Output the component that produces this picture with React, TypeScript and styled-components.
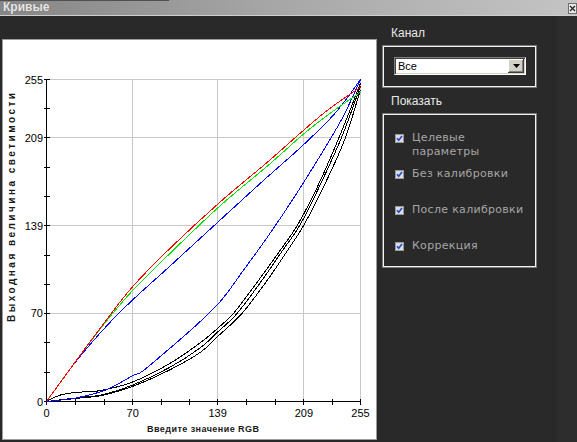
import React from "react";
import styled, { createGlobalStyle } from "styled-components";

type Pt = [number, number];

interface Curve {
  color: string;
  points: Pt[];
}

interface ShowOption {
  lines: string[];
}

const GlobalStyle = createGlobalStyle`
  html, body {
    margin: 0;
    padding: 0;
    background: #292929;
  }
  body {
    width: 577px;
    height: 442px;
    overflow: hidden;
    font-family: "Liberation Sans", Arial, sans-serif;
  }
`;

// plot geometry in page pixels
const X0 = 46.5;
const Y0 = 401.5;
const PLOT_W = 314;
const PLOT_H = 322;
const px = (v: number) => X0 + (v * PLOT_W) / 255;
const py = (v: number) => Y0 - (v * PLOT_H) / 255;

const MAJOR = [70, 139, 209, 255];
const TICKS = [0, 23.3, 46.7, 70, 93, 116, 139, 162.3, 185.7, 209, 232, 255];

const CURVES: Curve[] = [
  {
    color: "#000000",
    points: [[0, 0], [8, 4], [15, 6], [25, 7.3], [44, 8.7], [70, 15.5], [100, 30], [125, 46.6], [139, 58], [152, 70], [170, 93], [190, 120], [204, 140], [220, 170], [238, 210], [255, 252]],
  },
  {
    color: "#000000",
    points: [[0, 0], [25, 2.9], [46, 5.5], [70, 13], [100, 27], [125, 42.6], [139, 55], [155, 70], [175, 96], [192, 120], [206, 140], [222, 171], [240, 210], [255, 250]],
  },
  {
    color: "#000000",
    points: [[0, 0], [25, 2.5], [46, 5], [70, 12], [100, 25], [125, 39], [139, 51.5], [159, 70], [180, 97], [196, 120], [209, 139.7], [225, 170], [242, 207], [255, 247]],
  },
  {
    color: "#0000ff",
    points: [[0, 0], [25, 3], [49, 9.5], [70, 20.5], [78, 24], [100, 42], [120, 59], [141, 79], [160, 104], [180, 131], [200, 160], [220, 191], [240, 224], [255, 255]],
  },
  {
    color: "#0000ff",
    points: [[0, 0], [25, 33], [49, 60], [70, 80.5], [100, 107], [141, 143.7], [175, 174], [209, 203.6], [235, 229], [255, 255]],
  },
  {
    color: "#00e600",
    points: [[0, 0], [25, 33.5], [49, 64], [70, 88], [100, 117], [141, 155], [180, 187], [209, 212], [230, 228], [255, 245]],
  },
  {
    color: "#ff0000",
    points: [[0, 0], [25, 33.5], [49, 65], [70, 91], [100, 121], [141, 158], [180, 190], [209, 215], [230, 232], [255, 249]],
  },
];

const SHOW_OPTIONS: ShowOption[] = [
  { lines: ["Целевые", "параметры"] },
  { lines: ["Без калибровки"] },
  { lines: ["После калибровки"] },
  { lines: ["Коррекция"] },
];

// catmull-rom through the sampled points, as a cubic path
function smoothPath(points: Pt[]): string {
  const p = points.map(([x, y]) => [px(x), py(y)]);
  let d = `M${p[0][0].toFixed(2)},${p[0][1].toFixed(2)}`;
  for (let i = 0; i < p.length - 1; i++) {
    const p0 = p[i - 1] || p[i];
    const p1 = p[i];
    const p2 = p[i + 1];
    const p3 = p[i + 2] || p2;
    const c1x = p1[0] + (p2[0] - p0[0]) / 6;
    const c1y = p1[1] + (p2[1] - p0[1]) / 6;
    const c2x = p2[0] - (p3[0] - p1[0]) / 6;
    const c2y = p2[1] - (p3[1] - p1[1]) / 6;
    d += ` C${c1x.toFixed(2)},${c1y.toFixed(2)} ${c2x.toFixed(2)},${c2y.toFixed(2)} ${p2[0].toFixed(2)},${p2[1].toFixed(2)}`;
  }
  return d;
}

const snap = (n: number) => Math.floor(n) + 0.5;

function CurvesChart() {
  return (
    <ChartSvg width={373} height={399} viewBox="3 40 373 399">
      <g stroke="#c8c8c8" strokeWidth={1} shapeRendering="crispEdges">
        {MAJOR.map((v) => (
          <line key={`gx${v}`} x1={snap(px(v))} y1={py(255)} x2={snap(px(v))} y2={Y0} />
        ))}
        {MAJOR.map((v) => (
          <line key={`gy${v}`} x1={X0} y1={snap(py(v))} x2={px(255)} y2={snap(py(v))} />
        ))}
      </g>
      <g stroke="#000" strokeWidth={1} shapeRendering="crispEdges">
        <line x1={X0} y1={py(255)} x2={X0} y2={Y0} />
        <line x1={X0} y1={Y0} x2={px(255)} y2={Y0} />
        {TICKS.map((v) => (
          <line key={`ty${v}`} x1={X0 - 3} y1={snap(py(v))} x2={X0 + 3} y2={snap(py(v))} />
        ))}
        {TICKS.map((v) => (
          <line key={`tx${v}`} x1={snap(px(v))} y1={Y0 - 3} x2={snap(px(v))} y2={Y0 + 3} />
        ))}
      </g>
      <g fill="none" strokeWidth={1} shapeRendering="crispEdges">
        {CURVES.map((c, i) => (
          <path key={i} d={smoothPath(c.points)} stroke={c.color} />
        ))}
      </g>
      <g fontFamily='"Liberation Sans", Arial, sans-serif' fontSize={11} fill="#000">
        {[0, ...MAJOR].map((v) => (
          <text key={`ly${v}`} x={43} y={py(v) + 4} textAnchor="end">
            {v}
          </text>
        ))}
        {[0, ...MAJOR].map((v) => (
          <text key={`lx${v}`} x={px(v)} y={416.5} textAnchor="middle">
            {v}
          </text>
        ))}
      </g>
      <g fontFamily='"Liberation Sans", Arial, sans-serif' fontWeight="bold" fill="#1a1a1a">
        <text x={147} y={432} fontSize={9} textLength={112} lengthAdjust="spacing">
          Введите значение RGB
        </text>
        <text
          x={15}
          y={207.5}
          fontSize={10}
          textAnchor="middle"
          textLength={229}
          lengthAdjust="spacing"
          transform="rotate(-90 15 207.5)"
        >
          Выходная величина светимости
        </text>
      </g>
    </ChartSvg>
  );
}

function CheckMark() {
  return (
    <CheckSvg width={9} height={9} viewBox="0 0 9 9">
      <rect x={0.5} y={0.5} width={8} height={8} fill="#dcdee4" stroke="#9a9a9a" />
      <path d="M2 4.2 L3.7 6.2 L7 2" fill="none" stroke="#2448c8" strokeWidth={1.6} />
    </CheckSvg>
  );
}

export default function App() {
  return (
    <>
      <GlobalStyle />
      <Window>
        <TitleBar>
          <Title>Кривые</Title>
          <CloseBox>
            <svg width={7} height={7} viewBox="0 0 7 7">
              <path d="M1 1 L6 6 M6 1 L1 6" stroke="#222" strokeWidth={1.2} />
            </svg>
          </CloseBox>
        </TitleBar>
        <Body>
          <ChartPanel>
            <CurvesChart />
          </ChartPanel>
          <Side>
            <SectionLabel>Канал</SectionLabel>
            <GroupBox $top={6} $height={41} $pad="10px 0 0 10px">
              <Select>
                <SelectValue>Все</SelectValue>
                <DropButton>
                  <svg width={7} height={4} viewBox="0 0 7 4">
                    <polygon points="0,0 7,0 3.5,4" fill="#000" />
                  </svg>
                </DropButton>
              </Select>
            </GroupBox>
            <SectionLabel $top={7}>Показать</SectionLabel>
            <GroupBox $top={6} $height={153} $pad="16px 0 0 11px">
              {SHOW_OPTIONS.map((opt) => (
                <OptionRow key={opt.lines[0]}>
                  <CheckMark />
                  <OptionText>
                    {opt.lines.map((l) => (
                      <div key={l}>{l}</div>
                    ))}
                  </OptionText>
                </OptionRow>
              ))}
            </GroupBox>
          </Side>
        </Body>
      </Window>
    </>
  );
}

const Window = styled.div`
  width: 577px;
  height: 442px;
  display: flex;
  flex-direction: column;
  background: linear-gradient(to right, #292929 557px, #2d2d2d 557px);
`;

const TitleBar = styled.div`
  flex: none;
  height: 15px;
  display: flex;
  align-items: center;
  padding-left: 3px;
  background: linear-gradient(#505050, #505050) 0 0 / 169px 1px no-repeat,
    linear-gradient(to right, #868686, #a8a8a8 50%, #c4c4c4);
  border-bottom: 1px solid #cfcfcf;
`;

const Title = styled.span`
  font: bold 12px/15px "Liberation Sans", Arial, sans-serif;
  color: #e6e6e6;
  text-shadow: 0 0 1px #6a6a6a;
`;

const CloseBox = styled.div`
  margin-left: auto;
  margin-top: 1px;
  width: 9px;
  height: 11px;
  box-sizing: border-box;
  border: 1px solid #6e6e6e;
  background: #e8e8e8;
  display: flex;
  align-items: center;
  justify-content: center;
`;

const Body = styled.div`
  flex: 1;
  display: flex;
  align-items: flex-start;
  padding-left: 2px;
`;

const ChartPanel = styled.div`
  margin-top: 23px;
  width: 375px;
  height: 401px;
  box-sizing: border-box;
  border: 1px solid #9c9c9c;
  background: #ffffff;
`;

const ChartSvg = styled.svg`
  display: block;
`;

const Side = styled.div`
  margin-left: 6px;
  width: 153px;
  padding-top: 10px;
  display: flex;
  flex-direction: column;
`;

const SectionLabel = styled.div<{ $top?: number }>`
  margin-top: ${(p) => p.$top ?? 0}px;
  padding-left: 8px;
  font: 12px/14px "Liberation Sans", Arial, sans-serif;
  color: #e8e8e8;
`;

const GroupBox = styled.div<{ $top: number; $height: number; $pad: string }>`
  margin-top: ${(p) => p.$top}px;
  height: ${(p) => p.$height}px;
  box-sizing: border-box;
  padding: ${(p) => p.$pad};
  border: 1px solid #f2f2f2;
  box-shadow: 0 0 0 1px #7a7a7a;
`;

const Select = styled.div`
  width: 132px;
  height: 18px;
  box-sizing: border-box;
  display: flex;
  align-items: center;
  background: #ffffff;
  border: 1px solid;
  border-color: #808080 #ffffff #ffffff #808080;
  box-shadow: inset 1px 1px 0 #404040, inset -1px -1px 0 #d4d0c8;
  padding: 1px;
`;

const SelectValue = styled.span`
  flex: 1;
  padding-left: 2px;
  font: 11px/14px "Liberation Sans", Arial, sans-serif;
  color: #000;
`;

const DropButton = styled.div`
  width: 16px;
  height: 14px;
  box-sizing: border-box;
  display: flex;
  align-items: center;
  justify-content: center;
  background: #d4d0c8;
  box-shadow: inset -1px -1px 0 #404040, inset 1px 1px 0 #ffffff, inset -2px -2px 0 #808080;
`;

const OptionRow = styled.div`
  height: 36px;
  display: flex;
  align-items: flex-start;
  gap: 8px;
`;

const CheckSvg = styled.svg`
  flex: none;
  margin-top: 3px;
  display: block;
`;

const OptionText = styled.div`
  font: 11px/14px "DejaVu Sans", Verdana, sans-serif;
  letter-spacing: 0.3px;
  color: #a6a6a6;
`;
